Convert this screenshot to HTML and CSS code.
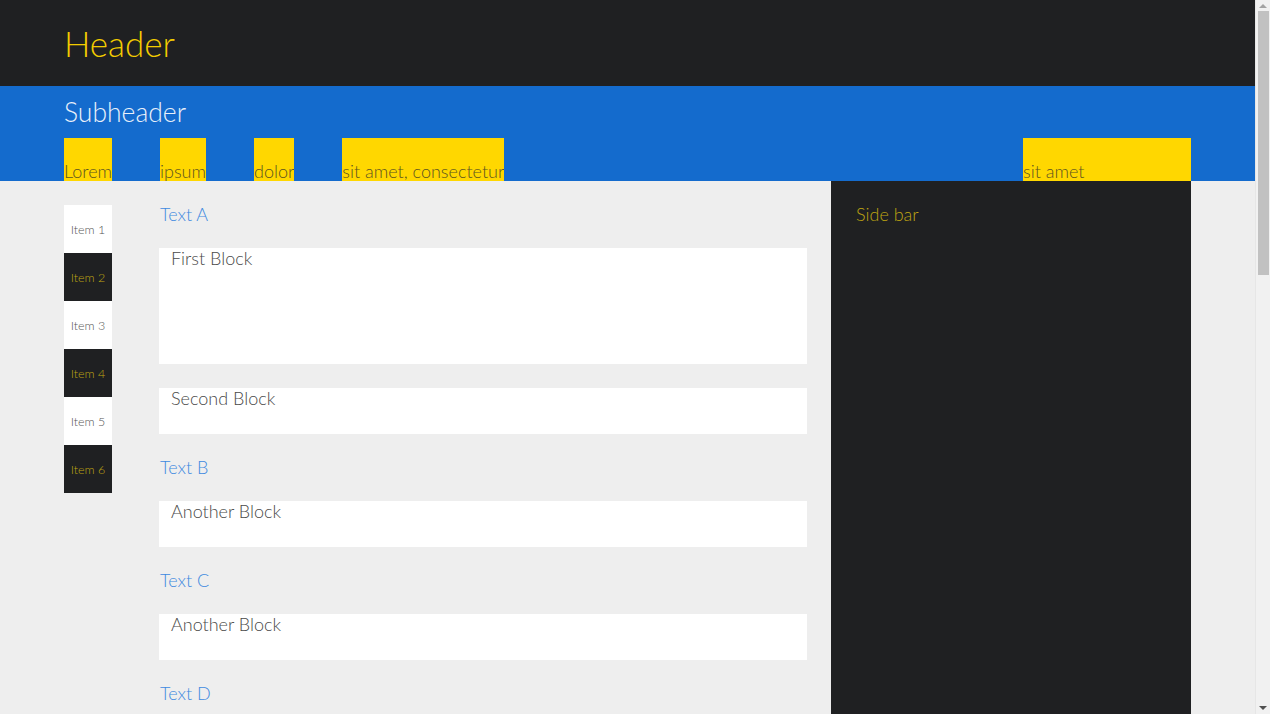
FILE: index.html
```html
<!DOCTYPE html>
<html>
<head>
<meta charset="utf-8">
<link rel="stylesheet" href="styles.css">
</head>
<body>
<div class="page">
<header class="header">
  <h1 class="header-title">Header</h1>
</header>
<section class="subheader">
  <h2 class="subheader-title">Subheader</h2>
  <nav class="nav">
    <a class="nav-item">Lorem</a>
    <a class="nav-item">ipsum</a>
    <a class="nav-item">dolor</a>
    <a class="nav-item">sit amet, consectetur</a>
    <a class="nav-item nav-item-last">sit amet</a>
  </nav>
</section>
<main class="main">
  <ul class="menu">
    <li class="menu-item light">Item 1</li>
    <li class="menu-item dark">Item 2</li>
    <li class="menu-item light">Item 3</li>
    <li class="menu-item dark">Item 4</li>
    <li class="menu-item light">Item 5</li>
    <li class="menu-item dark">Item 6</li>
  </ul>
  <div class="content">
    <p class="label">Text A</p>
    <div class="block block-tall">First Block</div>
    <div class="block">Second Block</div>
    <p class="label">Text B</p>
    <div class="block">Another Block</div>
    <p class="label">Text C</p>
    <div class="block">Another Block</div>
    <p class="label">Text D</p>
  </div>
  <aside class="sidebar">
    <p class="sidebar-title">Side bar</p>
  </aside>
</main>
</div>
<div class="scrollbar">
  <span class="arrow arrow-up"></span>
  <span class="thumb"></span>
  <span class="arrow arrow-down"></span>
</div>
</body>
</html>
```
FILE: styles.css
```css
* { box-sizing: border-box; }
html, body { margin: 0; padding: 0; }
body {
  font-family: "Lato", "Liberation Sans", sans-serif;
  font-weight: 300;
  background: #eeeeee;
}
.page {
  width: calc(100% - 15px);
}
.header {
  background: #1f2022;
  height: 86px;
  padding: 0 64px;
  display: flex;
  align-items: center;
}
.header-title {
  margin: 0;
  font-weight: 300;
  font-size: 35px;
  color: #f2cc00;
  line-height: 1;
}
.subheader {
  background: #146bcd;
  padding: 0 64px;
  height: 95px;
  display: flex;
  flex-direction: column;
}
.subheader-title {
  margin: 12px 0 0;
  height: 40px;
  font-weight: 300;
  font-size: 26.5px;
  color: #e9f0fa;
  line-height: 28px;
}
.nav {
  display: flex;
  gap: 48px;
  height: 43px;
}
.nav-item {
  background: #ffd700;
  color: #5d5420;
  font-size: 18px;
  line-height: 1;
  display: flex;
  align-items: flex-end;
  padding-bottom: 1px;
  white-space: nowrap;
}
.nav-item-last {
  margin-left: auto;
  width: 168px;
}
.main {
  display: flex;
  padding: 0 64px;
  min-height: 1660px;
}
.menu {
  list-style: none;
  margin: 24px 0 0;
  padding: 0;
  width: 48px;
  flex: none;
  align-self: flex-start;
}
.menu-item {
  height: 48px;
  display: flex;
  align-items: center;
  justify-content: center;
  font-size: 12.5px;
  white-space: nowrap;
}
.menu-item.light { background: #ffffff; color: #555555; }
.menu-item.dark { background: #1f2022; color: #bfa512; }
.content {
  flex: none;
  width: 648px;
  margin: 0 24px 0 47px;
  padding-top: 24px;
}
.label {
  margin: 0 0 24px 1px;
  font-size: 18px;
  line-height: 19px;
  color: #3f8ae0;
}
.block {
  background: #ffffff;
  height: 46px;
  padding: 0 12px;
  font-size: 18px;
  line-height: 20px;
  color: #4a4a4a;
  margin-bottom: 24px;
}
.block-tall { height: 116px; }
.sidebar {
  flex: 1;
  background: #1f2022;
  padding: 24px 25px;
}
.sidebar-title {
  margin: 0;
  font-size: 18px;
  line-height: 19px;
  color: #bfa512;
}
.scrollbar {
  position: fixed;
  top: 0;
  right: 0;
  width: 15px;
  height: 100%;
  background: #f1f1f1;
  border-left: 1px solid #e6e6e6;
}
.thumb {
  position: absolute;
  left: 2px;
  top: 11px;
  width: 11px;
  height: 264px;
  background: #c1c1c1;
}
.arrow {
  position: absolute;
  left: 3px;
  width: 0;
  height: 0;
  border-left: 4px solid transparent;
  border-right: 4px solid transparent;
}
.arrow-up {
  top: 4px;
  border-bottom: 4px solid #a3a3a3;
}
.arrow-down {
  bottom: 4px;
  border-top: 4px solid #505050;
}
```
